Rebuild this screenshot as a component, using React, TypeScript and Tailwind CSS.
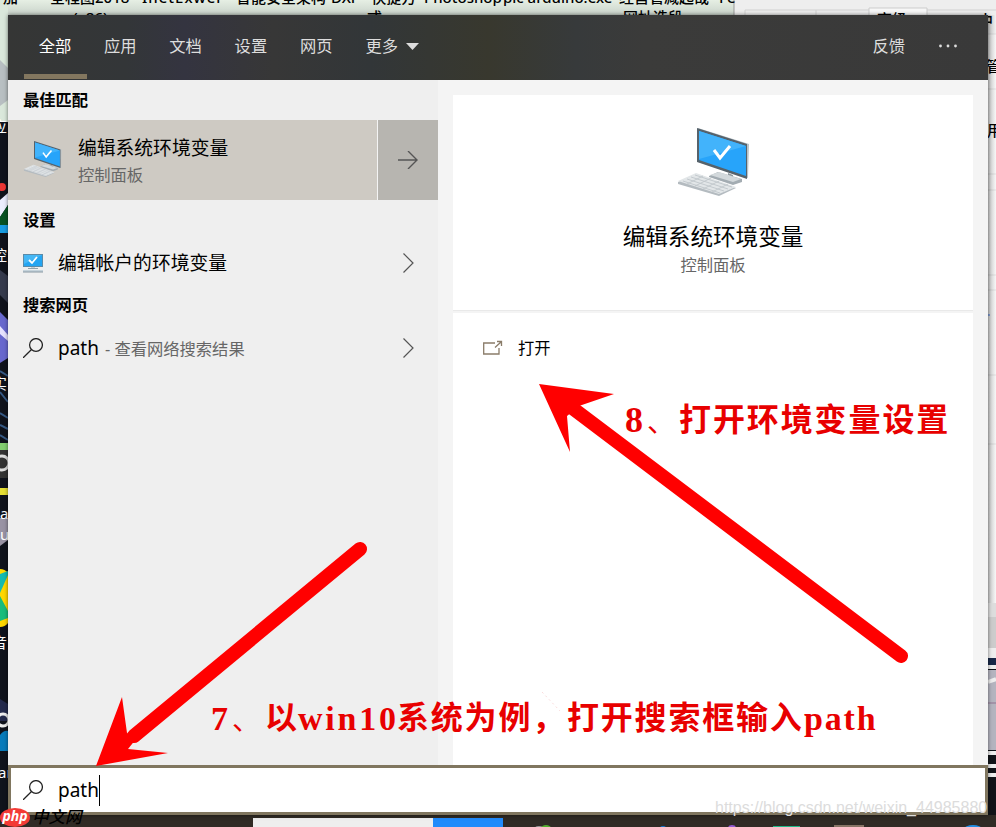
import React from "react";

const sans = "font-['Noto_Sans','Noto_Sans_CJK_SC',sans-serif]";
const serif = "font-['Liberation_Serif','Noto_Sans_CJK_SC',serif]";

function Computer({ className }: { className: string }) {
  return (
    <svg viewBox="0 0 72 68" className={className}>
      <path d="M20 0 71 16 70 50 20 34Z" fill="#b9c3c9" />
      <path d="M19 0 69 16v35L19 34Z" fill="#56626b" />
      <path d="M21 3 68 18v30L21 32Z" fill="#27a4fa" />
      <path d="M21 3 68 18 21 31Z" fill="#42b3fb" />
      <path d="m36 22 6 8 10-12" fill="none" stroke="#fff" strokeWidth="3" />
      <path d="m31 48 9-4 24 7v3l-9 3-24-8Z" fill="#a3acb2" />
      <path d="m50 45 5 2v5l-5-1Z" fill="#8e999f" />
      <path d="m32 47 9-3 22 7-8 3Z" fill="#d3d9dc" />
      <path d="m0 54 18-8 40 14-17 8L0 56Z" fill="#b4bbc0" />
      <path d="m0 53 18-8 40 14-17 7Z" fill="#e2e6e8" />
      <path d="m5 53 37 12M9 51l37 12M13 49l37 12M17 47l37 12M9 56l16-8M17 58l16-8M25 61l16-8M34 64l16-8" stroke="#c0c6cb" strokeWidth="0.9" />
    </svg>
  );
}

function Monitor() {
  return (
    <svg viewBox="0 0 20 20" className="h-5 w-5 shrink-0">
      <path d="M0 1h20v13H0z" fill="#5b8ba8" />
      <path d="M1 2h18v11H1z" fill="#24a5f2" />
      <path d="M1 2h18L1 11z" fill="#45b7f5" />
      <path d="m6 7 3 3 5-6" fill="none" stroke="#fff" strokeWidth="1.8" />
      <path d="M8 14h4v2H8z" fill="#c6d0d5" />
      <path d="M5 15.5h10" stroke="#91a1aa" />
      <path d="M0 17h20v2H0z" fill="#c5d3db" />
      <path d="M0 19h20" stroke="#8797a2" />
    </svg>
  );
}

function Search() {
  return (
    <svg viewBox="0 0 20 20" className="h-5 w-5 shrink-0" fill="none" stroke="#222" strokeWidth="1.25">
      <circle cx="13" cy="7" r="6.4" />
      <path d="M8.5 11.5 0 20" />
    </svg>
  );
}

function Chevron() {
  return (
    <svg viewBox="0 0 11 20" className="h-5 w-[11px]" fill="none" stroke="#555" strokeWidth="1.2">
      <path d="m.5.5 9.5 9.5-9.5 9.5" />
    </svg>
  );
}

function DesktopArt() {
  return (
    <svg viewBox="0 0 996 827" className="absolute inset-0 h-full w-full">
      <defs>
        <linearGradient id="sky" x1="0" x2="0" y1="0" y2="1">
          <stop stopColor="#e6efe4" />
          <stop offset="1" stopColor="#c9d3ca" />
        </linearGradient>
        <linearGradient id="shade">
          <stop stopColor="#999" />
          <stop offset="1" stopColor="#f5f5f5" />
        </linearGradient>
      </defs>
      <path d="M0 0h734v15H0z" fill="url(#sky)" />
      <path d="M734 0h262v827H734z" fill="#eee" />
      <path d="M734 0v15" stroke="#999" />
      <path d="M745 15v-5h71v5M816 10h53M927 10h69" fill="none" stroke="#d2d2d2" />
      <path d="M869 15V8h58v7" fill="#f8f8f8" stroke="#ccc" />
      <path d="M988 34h8v569h-8z" fill="#fafafa" />
      <path d="M988 34h8M988 89h8M988 174h8M988 190h8M988 275h8M988 290h8M988 375h8M988 444h8" stroke="#ccc" />
      <path d="M988 15h8v588h-8z" fill="url(#shade)" opacity=".55" />
      <path d="M988 315h2" stroke="#36c" />
      <path d="M988 603h8v14h-8z" fill="#ddd" />
      <path d="M988 617h8v31h-8z" fill="#ccc" />
      <path d="M988 648h8v10h-8z" fill="#eee" />
      <path d="M988 484h8v158h-8z" fill="none" />
      <path d="M988 658h8v157h-8z" fill="#111419" />
      <path d="M988 658h8v7h-8z" fill="#182848" />
      <path d="M988 670h8v80h-8z" fill="#b4b4bf" />
      <path d="M988 667h8M988 682l8-3M988 753h8M988 766h8M988 775h8" stroke="#eee" strokeWidth="4" />
      <path d="M988 703h8" stroke="#a294a8" strokeWidth="2" />
      <path d="M0 0h8v827H0z" fill="#10131c" />
      <path d="M0 0h8v122H0z" fill="#dae8db" />
      <path d="m0 60 8 8v32l-8 6z" fill="#b8bfc2" />
      <circle cx="2" cy="187" r="4" fill="#ec3634" />
      <path d="m0 200 8-7v12l-8 12z" fill="#eceeff" />
      <path d="m0 217 8-12v25H0z" fill="#075324" />
      <path d="M0 225h8v8H0z" fill="#189ce2" />
      <path d="m0 270 8 6v27l-8-8z" fill="#353a4c" />
      <path d="m0 312 8 8v38l-8 5z" fill="#6868ce" />
      <path d="m0 326 8 9v6l-8-7z" fill="#e6e2ff" />
      <path d="m0 371 8 5M0 392l8 10M0 413l8 5M0 425l8 4M0 435l8 5" stroke="#365985" strokeWidth="2" />
      <path d="M0 443h8v7H0z" fill="#83ce70" />
      <path d="M0 450h8v28H0z" fill="#333" />
      <circle cx="2" cy="463" r="7" fill="none" stroke="#ddd" strokeWidth="3" />
      <path d="M0 488h8v7H0z" fill="#e6df35" />
      <path d="M0 518h8v22l-8 6z" fill="#9993a4" />
      <path d="M0 569q5 0 8 4v50q-3 4-8 4z" fill="#ffd800" />
      <path d="m0 574 8-3v4l-8 18z" fill="#14bbb0" />
      <path d="m0 596 8 15v7l-8 3z" fill="#18bd7c" />
      <path d="m0 699 8 5v17H0z" fill="#242a4c" />
      <circle cx="3" cy="720" r="6" fill="none" stroke="#eee" strokeWidth="3" />
      <path d="M0 735q4-5 8-4v20H0z" fill="#087bbb" />
      <path d="M0 815h996v12H0z" fill="#302b25" />
      <path d="M253 818h180v9H253z" fill="#eee" />
      <path d="M433 818h70v9h-70z" fill="#218bfb" />
      <ellipse cx="539" cy="828" rx="4" ry="2" fill="#999" />
      <ellipse cx="546" cy="828" rx="5" ry="3" fill="#53ae2e" />
      <ellipse cx="663" cy="828" rx="3" ry="2" fill="#1477d4" />
      <ellipse cx="732" cy="828" rx="4" ry="3" fill="#9359d3" />
      <path d="M773 826h27v1h-27z" fill="#20b987" />
      <path d="M834 825h30v2h-30z" fill="#887566" />
      <ellipse cx="973" cy="829" rx="9" ry="4" fill="#228ee4" />
    </svg>
  );
}

const labels = [
  { text: "加", pos: "left-[3px] -top-[13px]" },
  { text: "全程图2018", pos: "left-[50px] -top-[13px]" },
  { text: "InetExwer", pos: "left-[142px] -top-[13px] tracking-[1px]" },
  { text: "智能安全架构", pos: "left-[236px] -top-[13px]" },
  { text: "DXF - 快捷方", pos: "left-[331px] -top-[13px]" },
  { text: "Photoshop", pos: "left-[424px] -top-[13px]" },
  { text: "pic arduino.exe", pos: "left-[503px] -top-[13px]" },
  { text: "经营管减起哉", pos: "left-[619px] -top-[13px]" },
  { text: "Fe", pos: "left-[719px] -top-[13px]" },
  { text: "(x86)", pos: "left-[73px] top-[7px]" },
  { text: "pro-com-c", pos: "left-[142px] top-[7px]" },
  { text: "式", pos: "left-[367px] top-[7px]" },
  { text: "pc", pos: "left-[462px] top-[7px]" },
  { text: "网址选段", pos: "left-[623px] top-[7px]" },
  { text: "高级", pos: "left-[877px] top-[9px]" },
  { text: "中", pos: "left-[978px] top-[10px]" },
  { text: "管", pos: "left-[986px] top-[56px]" },
  { text: "用", pos: "left-[987px] top-[120px]" },
];
const edge = [
  { text: "应", pos: "-left-2 top-[114px]" },
  { text: "控", pos: "-left-2 top-[243px]" },
  { text: "实", pos: "-left-2 top-[371px]" },
  { text: "a", pos: "left-0 top-[501px]" },
  { text: "u", pos: "left-0 top-[522px]" },
  { text: "音", pos: "-left-2 top-[630px]" },
  { text: "ar", pos: "-left-[2px] top-[760px]" },
];
const tabs = ["全部", "应用", "文档", "设置", "网页"];

export default function App() {
  return (
    <div className={`relative h-[827px] w-[996px] overflow-hidden bg-[#302b25] pl-2 pt-[15px] text-black ${sans}`}>
      <DesktopArt />
      {labels.map((l) => (
        <span key={l.text} className={`absolute whitespace-nowrap text-[15px] font-medium leading-5 ${l.pos}`}>{l.text}</span>
      ))}
      {edge.map((l) => (
        <span key={l.text} className={`absolute whitespace-nowrap text-[15px] leading-6 text-white ${l.pos}`}>{l.text}</span>
      ))}

      <div className="relative flex h-[800px] w-[980px] flex-col bg-[#f4f4f4] shadow-[0_0_4px_rgba(0,0,0,0.55)]">
        <header className="flex h-[65px] shrink-0 bg-[linear-gradient(90deg,#353635_0%,#333638_12%,#343440_18%,#373737_27%,#323638_37%,#38382e_49%,#373a3b_58%,#3b3b3a_65%,#393939_100%)] pl-4 text-[16.3px] text-[#ddd]">
          {tabs.map((t, i) => (
            <div key={t} className={`mr-[2.3px] flex h-16 w-[63px] items-center justify-center border-b-5 pr-px pt-[3px] ${i === 0 ? "border-[#83775f] text-white" : "border-transparent"}`}>{t}</div>
          ))}
          <div className="flex h-16 items-center border-b-5 border-transparent pl-[15px] pt-[3px]">
            更多
            <svg viewBox="0 0 13 7" className="ml-2 h-[7px] w-[13px]"><path d="M0 0h13L6.5 7z" fill="#ddd" /></svg>
          </div>
          <div className="ml-auto flex h-16 items-center border-b-5 border-transparent pr-[31px] pt-[3px]">
            反馈
            <svg viewBox="0 0 18 4" className="ml-[34px] h-1 w-[18px]" fill="#ddd"><circle cx="1.5" cy="2" r="1.4" /><circle cx="9" cy="2" r="1.4" /><circle cx="16.5" cy="2" r="1.4" /></svg>
          </div>
        </header>

        <div className="flex h-[685px] shrink-0">
          <aside className="w-[430px] bg-[#efefef]">
            <h2 className="h-10 pl-[15px] text-[16.3px] font-bold leading-10">最佳匹配</h2>
            <div className="flex h-20">
              <div className="flex w-[369px] bg-[#cecac3] pl-[15px]">
                <Computer className="mt-[21px] h-[36px] w-[40px]" />
                <div className="ml-[15px] pt-[14px]">
                  <div className="text-[18.8px] leading-[28px]">编辑系统环境变量</div>
                  <div className="text-[16.3px] leading-[26px] text-[#666]">控制面板</div>
                </div>
              </div>
              <div className="flex w-[61px] items-center justify-center border-l border-[#f4f4f4] bg-[#b7b5b0] pr-px">
                <svg viewBox="0 0 20 18" className="h-[18px] w-5" fill="none" stroke="#555" strokeWidth="1.4"><path d="M0 9h19M10 0l9 9-9 9" /></svg>
              </div>
            </div>
            <h2 className="h-10 pl-[15px] text-[16.3px] font-bold leading-10">设置</h2>
            <div className="flex h-[45px] items-center pb-px pl-[15px] pr-6 pt-[2px]">
              <Monitor />
              <span className="ml-[15px] text-[18.8px]">编辑帐户的环境变量</span>
              <span className="ml-auto"><Chevron /></span>
            </div>
            <h2 className="h-10 pl-[15px] text-[16.3px] font-bold leading-10">搜索网页</h2>
            <div className="flex h-[45px] items-center pl-[15px] pr-6 pt-[1px]">
              <Search />
              <span className="ml-[15px] text-[19px]">path</span>
              <span className="ml-[6px] mt-[2px] whitespace-nowrap text-[16.3px] text-[#666]">- 查看网络搜索结果</span>
              <span className="ml-auto"><Chevron /></span>
            </div>
          </aside>

          <main className="ml-[15px] mt-[15px] w-[520px]">
            <section className="flex h-[215px] flex-col items-center bg-white pt-[33px]">
              <Computer className="ml-[2px] h-[68px] w-[72px]" />
              <h1 className="mt-[25px] text-[22.6px] leading-8">编辑系统环境变量</h1>
              <p className="text-[16.3px] leading-[25px] text-[#666]">控制面板</p>
            </section>
            <div className="h-[3px] border-t border-[#e9e9e9]" />
            <section className="h-[452px] bg-white px-[30px] pt-[21px]">
              <div className="flex h-7 items-center">
                <svg viewBox="0 0 20 16" className="h-4 w-5" fill="none" stroke="#8a7c69" strokeWidth="1.3"><path d="M12 3H.7v11H16V8M12 7.5 18 2M14 1.5h4.5V6" /></svg>
                <span className="ml-[15px] text-[16.3px]">打开</span>
              </div>
            </section>
          </main>
        </div>

        <div className="flex h-[50px] shrink-0 items-center border-3 border-[#80765f] bg-white pl-3">
          <Search />
          <span className="ml-[15px] text-[19px]">path</span>
          <span className="h-[31px] w-px bg-black" />
        </div>
      </div>

      <svg viewBox="0 0 996 827" className="absolute inset-0 h-full w-full" fill="#f00" stroke="none">
        <path d="M360 549 134 736" stroke="#f00" strokeWidth="14" strokeLinecap="round" />
        <path d="m96 766 26-69 5 36 9 6-8 10 40 4Z" />
        <path d="m901 656-330-249" stroke="#f00" strokeWidth="14" strokeLinecap="round" />
        <path d="m539 384 75 10-35 12-12 10 3 36Z" />
        <path d="m542 692 18 19" stroke="#fadcdc" strokeDasharray="2 3" />
      </svg>

      <div className={`absolute left-[625px] top-[396px] flex h-12 items-center whitespace-nowrap text-[32px] font-bold text-[#e80000] ${serif}`}>
        <span className="w-[54px] text-[36px]">8<span className="ml-1 text-[28px] font-normal">、</span></span>
        <span className="tracking-[1.9px]">打开环境变量设置</span>
      </div>
      <div className={`absolute left-[211px] top-[694px] flex h-12 items-center whitespace-nowrap text-[32px] font-bold text-[#e80000] ${serif}`}>
        <span className="w-[54px] text-[34px]">7<span className="ml-1 text-[28px] font-normal">、</span></span>
        <span className="w-[33px]">以</span>
        <span className="w-[99px] text-[34px] tracking-[2.8px]">win10</span>
        <span className="w-[170px] tracking-[1.8px]">系统为例，</span>
        <span className="w-[237px] tracking-[1.8px]">打开搜索框输入</span>
        <span className="text-[34px] tracking-[1.8px]">path</span>
      </div>

      <div className="absolute left-[715px] top-[798px] whitespace-nowrap font-['Liberation_Sans',sans-serif] text-[16px] leading-5 text-[#dcdcdc]">https://blog.csdn.net/weixin_44985880</div>
      <div className="absolute left-0 top-[807px] flex h-5 items-center italic">
        <span className="flex h-[19px] w-[30px] items-center justify-center rounded-[50%] bg-[#f33b36] pb-[3px] text-[14px] font-bold text-white">php</span>
        <span className="ml-[2px] text-[16.5px] font-medium text-black">中文网</span>
      </div>
    </div>
  );
}
